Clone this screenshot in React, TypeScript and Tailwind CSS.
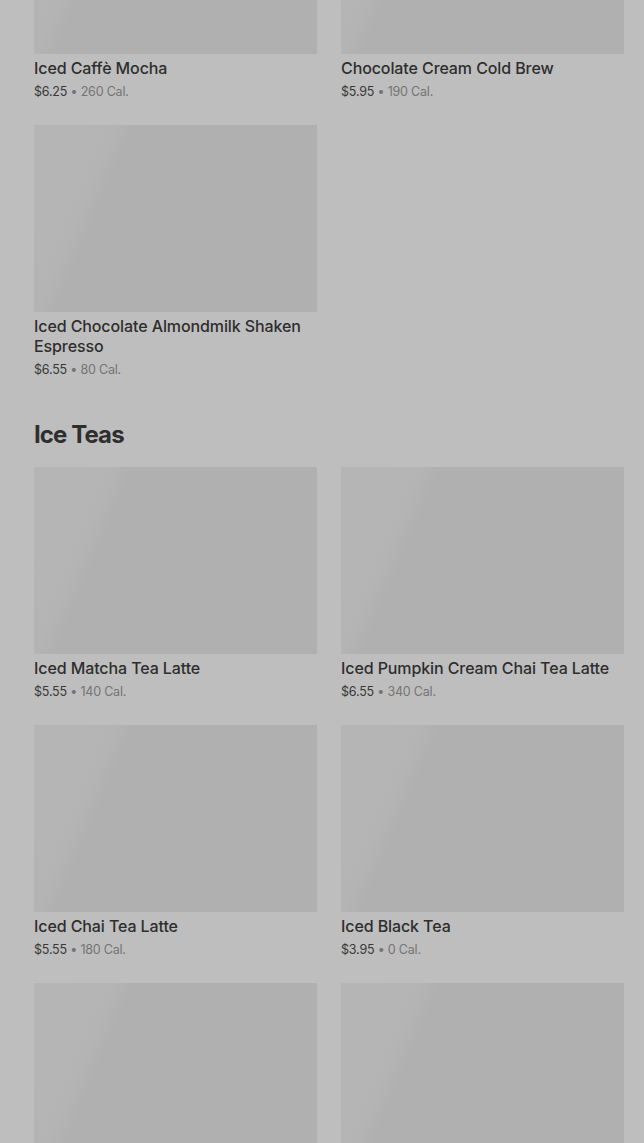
const shim =
  "bg-[linear-gradient(113deg,#b5b5b5_0%,#b4b4b4_22%,#b0b0b0_28%,#b0b0b0_100%)]";

type Item = { name: string; price: string; cal: string };

const coldCoffees: Item[] = [
  { name: "Iced Caffè Mocha", price: "$6.25", cal: "260 Cal." },
  { name: "Chocolate Cream Cold Brew", price: "$5.95", cal: "190 Cal." },
  { name: "Iced Chocolate Almondmilk Shaken Espresso", price: "$6.55", cal: "80 Cal." },
];

const iceTeas: Item[] = [
  { name: "Iced Matcha Tea Latte", price: "$5.55", cal: "140 Cal." },
  { name: "Iced Pumpkin Cream Chai Tea Latte", price: "$6.55", cal: "340 Cal." },
  { name: "Iced Chai Tea Latte", price: "$5.55", cal: "180 Cal." },
  { name: "Iced Black Tea", price: "$3.95", cal: "0 Cal." },
];

function Card({ item }: { item?: Item }) {
  return (
    <div className="flex flex-col">
      <div className={`h-[187px] w-full ${shim}`} />
      {item && (
        <>
          <p className="mt-[4px] text-[16px] leading-[20px] font-medium tracking-[-0.1px] text-[#2e2e2e]">
            {item.name}
          </p>
          <p className="mt-[5px] mb-[-1px] text-[12.5px] leading-[18px] tracking-[-0.2px]">
            <span className="text-[#383838]">{item.price}</span>
            <span className="text-[#747474]"> • {item.cal}</span>
          </p>
        </>
      )}
    </div>
  );
}

export default function App() {
  return (
    <div
      className="h-[1143px] overflow-hidden bg-[#bebebe]"
      style={{ fontFamily: "Inter, 'Liberation Sans', sans-serif" }}
    >
      <div className="-mt-[133px] pl-[34px] pr-[20px]">
        <div className="grid grid-cols-2 gap-x-[24px] gap-y-[25px]">
          {coldCoffees.map((it) => (
            <Card key={it.name} item={it} />
          ))}
        </div>
        <h2 className="mt-[41px] mb-[-1px] text-[24px] leading-[32px] font-bold tracking-[-0.9px] text-[#2e2e2e]">
          Ice Teas
        </h2>
        <div className="mt-[17px] grid grid-cols-2 gap-x-[24px] gap-y-[25px]">
          {iceTeas.map((it) => (
            <Card key={it.name} item={it} />
          ))}
          <Card />
          <Card />
        </div>
      </div>
    </div>
  );
}
